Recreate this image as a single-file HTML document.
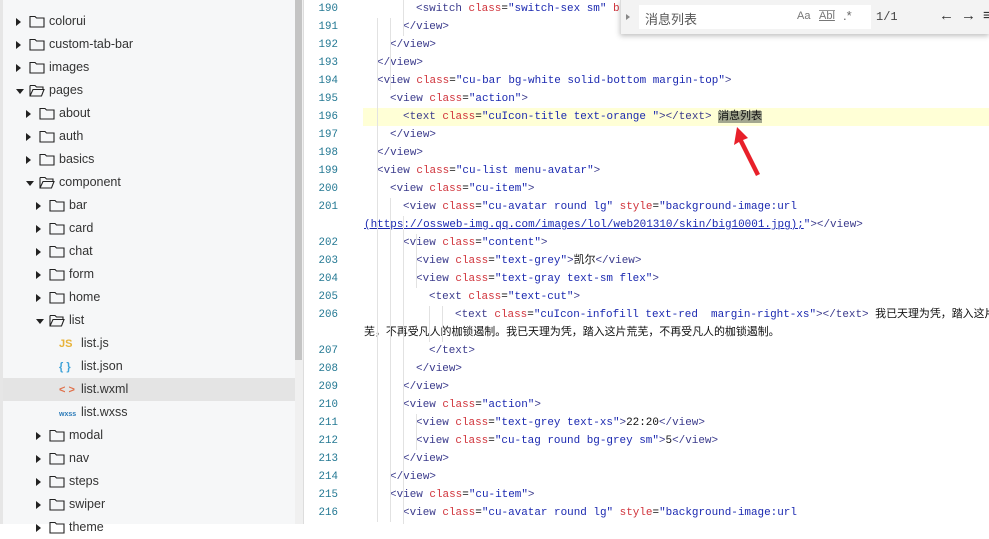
<!DOCTYPE html>
<html><head><meta charset="utf-8"><style>
*{margin:0;padding:0;box-sizing:border-box}
body{width:989px;height:524px;overflow:hidden;background:#fff;position:relative;font-family:"Liberation Sans","Noto Sans CJK SC",sans-serif}
#side{position:absolute;left:0;top:0;width:295px;height:524px;background:#f6f7f8;border-left:3px solid #e6e6e6}
.it{position:absolute;height:23px;line-height:23px;font-size:12.5px;color:#333;white-space:nowrap}
.ar{position:absolute;width:0;height:0}
.ar.r{border-top:4px solid transparent;border-bottom:4px solid transparent;border-left:5px solid #222}
.ar.d{border-left:4px solid transparent;border-right:4px solid transparent;border-top:5px solid #222}
#sb{position:absolute;left:295px;top:0;width:8px;height:524px;background:#f0f0f0}
#sbt{position:absolute;left:295px;top:0;width:7px;height:360px;background:#c4c4c4}
#ed{position:absolute;left:303px;top:0;width:686px;height:524px;border-left:1px solid #ddd;overflow:hidden}
.ln{position:absolute;left:0;width:34px;text-align:right;font-family:"Liberation Mono",monospace;font-size:10.8px;color:#237893;height:18px;line-height:18px}
.cd{position:absolute;font-family:"Liberation Mono","Noto Sans CJK SC",monospace;font-size:10.95px;white-space:pre;height:18px;line-height:18px;color:#3a3a8c}
.a{color:#d0323a}.s{color:#1a28b0}.k{color:#111}
.g{position:absolute;width:1px;background:#e2e2e2}
</style></head><body>
<div id="side">
<div style="position:absolute;left:0;top:378px;width:292px;height:23px;background:#e4e4e4"></div>
</div>
<div id="sb"></div><div id="sbt"></div>
<div id="tree"></div>
<div id="ed">
<div style="position:absolute;left:59px;top:108px;width:640px;height:18px;background:#ffffd6"></div>
</div>
<div id="find" style="position:absolute;left:620px;top:0;width:369px;height:34px;background:#f3f3f3;box-shadow:0 2px 5px rgba(0,0,0,.25);border-left:1px solid #ddd">
<div style="position:absolute;left:5px;top:14px;border-top:3.5px solid transparent;border-bottom:3.5px solid transparent;border-left:4px solid #888"></div>
<div style="position:absolute;left:18px;top:5px;width:232px;height:24px;background:#fff"></div>
<div style="position:absolute;left:24px;top:9px;font-size:13px;color:#555;font-family:'Liberation Sans','Noto Sans CJK SC',sans-serif">消息列表</div>
<div style="position:absolute;left:176px;top:10px;font-size:11px;color:#777">Aa</div>
<div style="position:absolute;left:198px;top:10px;font-size:11px;color:#777;text-decoration:underline;border-top:1px solid #999;line-height:11px">Abl</div>
<div style="position:absolute;left:222px;top:8px;font-size:13px;color:#666">.*</div>
<div style="position:absolute;left:255px;top:10px;font-size:12px;color:#444;font-family:'Liberation Mono',monospace">1/1</div>
<div style="position:absolute;left:318px;top:7px;font-size:15px;color:#333;font-weight:bold">←</div>
<div style="position:absolute;left:340px;top:7px;font-size:15px;color:#333;font-weight:bold">→</div>
<div style="position:absolute;left:362px;top:7px;font-size:15px;color:#333">≡</div>
</div>
<svg style="position:absolute;left:0;top:0" width="989" height="524"><path d="M760 174 L743 140 L748 138 L737 127 L734 145 L739 142 L756 176Z" fill="#e8202a"/></svg>
<script>
const tr=[["colorui",0,'r'],["custom-tab-bar",0,'r'],["images",0,'r'],["pages",0,'d'],["about",1,'r'],["auth",1,'r'],["basics",1,'r'],["component",1,'d'],["bar",2,'r'],["card",2,'r'],["chat",2,'r'],["form",2,'r'],["home",2,'r'],["list",2,'d'],["list.js",3,'js'],["list.json",3,'json'],["list.wxml",3,'wxml'],["list.wxss",3,'wxss'],["modal",2,'r'],["nav",2,'r'],["steps",2,'r'],["swiper",2,'r'],["theme",2,'r']];
let h='';
tr.forEach((t,i)=>{const y=10+i*23;const off=t[1]*10;
if(t[2]=='r'||t[2]=='d'){
h+=`<div class="ar ${t[2]}" style="left:${16+off}px;top:${y+(t[2]=='r'?8:10)}px"></div>`;
const svg=t[2]=='r'?'<path d="M1 2.5h5l1.5 1.5H15v9H1z" fill="none" stroke="#222" stroke-width="1.1"/>':'<path d="M1 2.5h5l1.5 1.5H14v2M1 2.5v10.5h11.5L15 6.5H4L1 13" fill="none" stroke="#222" stroke-width="1.1"/>';
h+=`<svg style="left:${29+off}px;top:${y+4}px;position:absolute" width="16" height="15">${svg}</svg>`;
h+=`<div class="it" style="left:${49+off}px;top:${y}px">${t[0]}</div>`;}
else{let ic='';
if(t[2]=='js')ic='<span style="color:#e8b33a;font-weight:bold;font-size:11px">JS</span>';
if(t[2]=='json')ic='<span style="color:#3ea2d8;font-weight:bold;font-size:11px">{ }</span>';
if(t[2]=='wxml')ic='<span style="color:#e0704a;font-weight:bold;font-size:11px">&lt; &gt;</span>';
if(t[2]=='wxss')ic='<span style="color:#2a7ab8;font-weight:bold;font-size:7px">wxss</span>';
h+=`<div class="it" style="left:59px;top:${y}px">${ic}</div><div class="it" style="left:81px;top:${y}px">${t[0]}</div>`;}
});
document.getElementById('tree').innerHTML=h;
const T=(n)=>`<span>&lt;${n}</span>`;
const A=(a,v)=>` <span class="a">${a}</span><span class="k">=</span><span class="s">"${v}"</span>`;
const C=(n)=>`<span>&lt;/${n}&gt;</span>`;
const G='<span>&gt;</span>';
const rows=[
[190,415,T('switch')+A('class','switch-sex sm')+' <span class="a">b</span>'],
[191,402,C('view')],[192,389,C('view')],[193,376,C('view')],
[194,376,T('view')+A('class','cu-bar bg-white solid-bottom margin-top')+G],
[195,389,T('view')+A('class','action')+G],
[196,402,T('text')+A('class','cuIcon-title text-orange ')+G+C('text')+' <span class="k" style="background:#a3a78f">消息列表</span>'],
[197,389,C('view')],[198,376,C('view')],
[199,376,T('view')+A('class','cu-list menu-avatar')+G],
[200,389,T('view')+A('class','cu-item')+G],
[201,402,T('view')+A('class','cu-avatar round lg')+' <span class="a">style</span><span class="k">=</span><span class="s">"background-image:url</span>'],
[0,363,'<span class="s" style="text-decoration:underline">(https://ossweb-img.qq.com/images/lol/web201310/skin/big10001.jpg);</span><span class="s">"</span><span>&gt;&lt;/view&gt;</span>'],
[202,402,T('view')+A('class','content')+G],
[203,415,T('view')+A('class','text-grey')+G+'<span class="k">凯尔</span>'+C('view')],
[204,415,T('view')+A('class','text-gray text-sm flex')+G],
[205,428,T('text')+A('class','text-cut')+G],
[206,454,T('text')+A('class','cuIcon-infofill text-red  margin-right-xs')+G+C('text')+'<span class="k"> 我已天理为凭，踏入这片</span>'],
[0,363,'<span class="k">芜，不再受凡人的枷锁遏制。我已天理为凭，踏入这片荒芜，不再受凡人的枷锁遏制。</span>'],
[207,428,C('text')],[208,415,C('view')],[209,402,C('view')],
[210,402,T('view')+A('class','action')+G],
[211,415,T('view')+A('class','text-grey text-xs')+G+'<span class="k">22:20</span>'+C('view')],
[212,415,T('view')+A('class','cu-tag round bg-grey sm')+G+'<span class="k">5</span>'+C('view')],
[213,402,C('view')],[214,389,C('view')],
[215,389,T('view')+A('class','cu-item')+G],
[216,402,T('view')+A('class','cu-avatar round lg')+' <span class="a">style</span><span class="k">=</span><span class="s">"background-image:url</span>']
];
let e='';
rows.forEach((r,i)=>{const y=i*18;
if(r[0])e+=`<div class="ln" style="top:${y}px">${r[0]}</div>`;
e+=`<div class="cd" style="left:${r[1]-303}px;top:${y}px">${r[2]}</div>`;});
[[376,18,504],[389,18,72],[402,0,36],[389,198,324],[402,216,306],[415,234,54],[428,306,36],[441,306,36],[415,414,36],[402,504,20]].forEach(g=>{e+=`<div class="g" style="left:${g[0]-303}px;top:${g[1]}px;height:${g[2]}px"></div>`});
document.getElementById('ed').innerHTML+=e;
</script>
</body></html>
